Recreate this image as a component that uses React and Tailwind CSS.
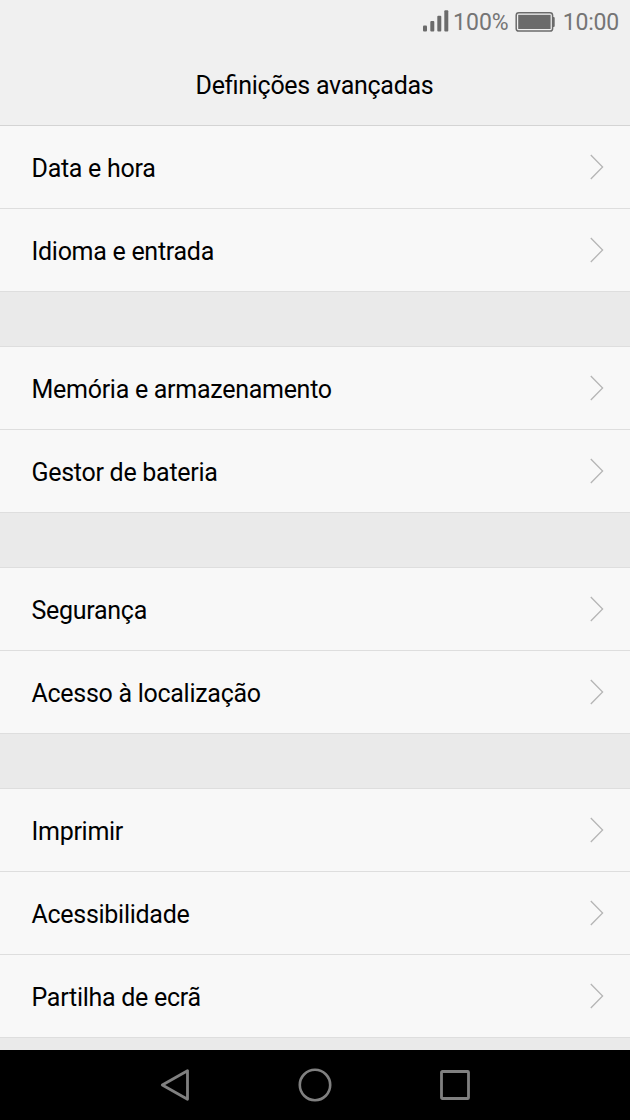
import React from "react";

const GROUPS = [
  ["Data e hora", "Idioma e entrada"],
  ["Memória e armazenamento", "Gestor de bateria"],
  ["Segurança", "Acesso à localização"],
  ["Imprimir", "Acessibilidade", "Partilha de ecrã"],
];

const SignalIcon = () => (
  <svg width="26" height="22" viewBox="0 0 26 22" fill="#6b6b6b" className="-mt-[2px]">
    <rect x="0" y="15.5" width="4" height="6" rx="1" />
    <rect x="7.3" y="11" width="4" height="10.5" rx="1" />
    <rect x="14.3" y="5.7" width="4" height="15.8" rx="1" />
    <rect x="21.3" y="0.3" width="4" height="21.2" rx="1" />
  </svg>
);

const BatteryIcon = () => (
  <svg width="40" height="20" viewBox="0 0 40 20" fill="#6b6b6b">
    <rect x="1.2" y="0.8" width="36.4" height="18.2" rx="2.6" fill="none" stroke="#6b6b6b" strokeWidth="1.5" />
    <rect x="3.2" y="2.8" width="32.4" height="14.2" />
    <path d="M37.5 5h1.2a1 1 0 0 1 1 1v8a1 1 0 0 1-1 1h-1.2z" />
  </svg>
);

const ChevronIcon = () => (
  <svg width="14" height="26" viewBox="0 0 14 26" fill="none" stroke="#b5b5b5" strokeWidth="1.3">
    <path d="M0.8 1 12.6 13 0.8 25" />
  </svg>
);

const StatusBar = () => (
  <div className="flex h-[44px] items-center justify-end pr-[11px] text-[23px] leading-none tracking-normal text-[#757575]">
    <SignalIcon />
    <span className="ml-[4px]">100%</span>
    <span className="ml-[6px]">
      <BatteryIcon />
    </span>
    <span className="ml-[8px] tracking-[-0.2px]">10:00</span>
  </div>
);

const SettingsRow = ({ label }) => (
  <button className="flex h-[83px] w-full items-center justify-between border-b border-[#dedede] bg-[#f8f8f8] pl-[31.5px] pr-[26px] pt-[2px] text-left">
    <span>{label}</span>
    <span className="-mt-[2px]">
      <ChevronIcon />
    </span>
  </button>
);

const NavBar = () => (
  <nav className="flex h-[70px] shrink-0 items-center justify-center gap-[100px] bg-black">
    <svg width="40" height="40" viewBox="0 0 40 40" fill="none" stroke="#808080" strokeWidth="2.8" strokeLinejoin="round">
      <path d="M32.5 5.7v28.6L7.3 20z" />
    </svg>
    <svg width="40" height="40" viewBox="0 0 40 40" fill="none" stroke="#808080" strokeWidth="2.6">
      <circle cx="20" cy="20" r="15.2" />
    </svg>
    <svg width="40" height="40" viewBox="0 0 40 40" fill="none" stroke="#808080" strokeWidth="2.8" strokeLinejoin="round">
      <rect x="6.5" y="6.5" width="27" height="27" rx="0.8" />
    </svg>
  </nav>
);

const App = () => {
  return (
    <div className="flex h-[1120px] w-[630px] flex-col overflow-hidden bg-[#eaeaea] font-['Roboto',sans-serif] text-[25px] leading-none tracking-[-0.28px] text-black">
      {/* Header */}
      <header className="h-[126px] shrink-0 border-b border-[#d4d4d4] bg-[#f0f0f0]">
        <StatusBar />
        <h1 className="flex h-[81px] items-center justify-center pr-px pt-px [font-feature-settings:'liga']">
          Definições avançadas
        </h1>
      </header>

      {/* Settings list */}
      <main className="min-h-0 flex-1 overflow-hidden">
        {GROUPS.map((items, index) => (
          <section key={items[0]}>
            {index > 0 && <div className="h-[55px] border-b border-[#dedede]" />}
            {items.map((label) => (
              <SettingsRow key={label} label={label} />
            ))}
          </section>
        ))}
      </main>

      <NavBar />
    </div>
  );
};

export default App;
